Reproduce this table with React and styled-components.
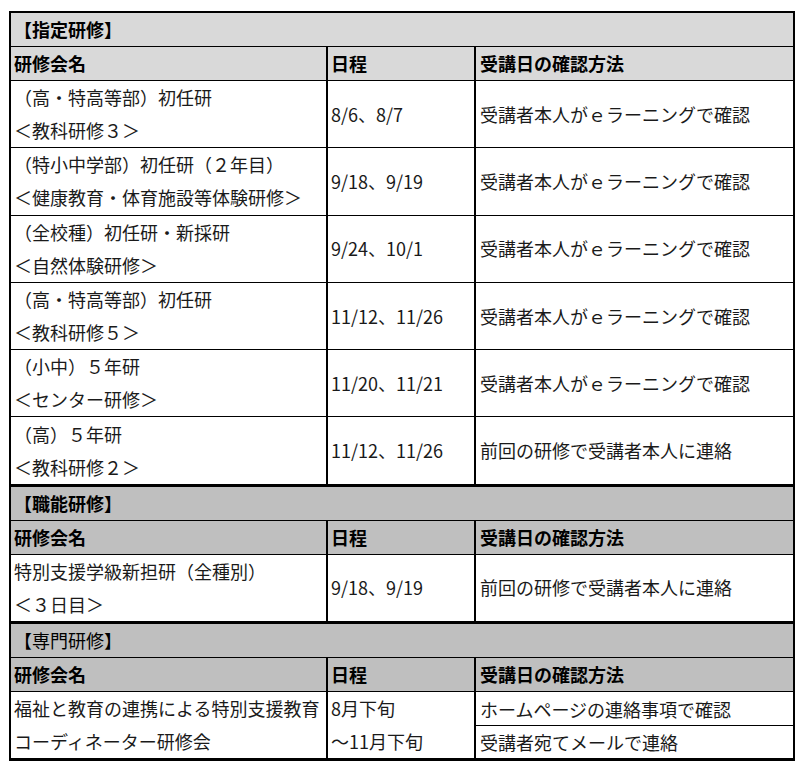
import React from "react";
import styled, { createGlobalStyle } from "styled-components";

const GlobalStyle = createGlobalStyle`
  html, body {
    margin: 0;
    padding: 0;
    background: #ffffff;
  }
  body {
    font-family: "Noto Sans CJK JP", "Noto Sans", sans-serif;
    font-size: 18px;
    color: #1a1a1a;
  }
`;

const Sheet = styled.div`
  box-sizing: border-box;
  width: 786px;
  margin: 11px 0 0 9px;
  border: 2px solid #000;
`;

const Section = styled.section`
  border-top: ${(p) => (p.$first ? "none" : "2px solid #000")};
`;

const Title = styled.div`
  box-sizing: border-box;
  height: 34px;
  line-height: 33px;
  padding-left: 3px;
  background: ${(p) => p.$bg};
  font-weight: ${(p) => (p.$bold ? 700 : 400)};
  color: #000;
  border-bottom: 1px solid #000;
  white-space: nowrap;
`;

const Row = styled.div`
  box-sizing: border-box;
  display: grid;
  grid-template-columns: 317px 148px 1fr;
  height: ${(p) => p.$h}px;
  background: ${(p) => p.$bg || "#ffffff"};
  font-weight: ${(p) => (p.$head ? 700 : 400)};
  color: ${(p) => (p.$head ? "#000" : "#1a1a1a")};
  border-bottom: 1px solid #000;
`;

const Cell = styled.div`
  display: flex;
  flex-direction: column;
  justify-content: center;
  padding-left: ${(p) => p.$pad || 3}px;
  border-right: ${(p) => (p.$end ? "none" : "2px solid #000")};
  line-height: 33px;
  white-space: nowrap;
  overflow: hidden;
`;

const SplitCell = styled.div`
  display: flex;
  flex-direction: column;
`;

const SubCell = styled.div`
  box-sizing: border-box;
  height: ${(p) => p.$h}px;
  line-height: ${(p) => p.$h}px;
  padding-left: 4px;
  border-bottom: ${(p) => (p.$line ? "1px solid #000" : "none")};
  white-space: nowrap;
`;

const Line = styled.span`
  display: block;
`;

const E = "受講者本人がｅラーニングで確認";
const R = "前回の研修で受講者本人に連絡";

const section1 = [
  ["（高・特高等部）初任研", "＜教科研修３＞", "8/6、8/7", E],
  ["（特小中学部）初任研（２年目）", "＜健康教育・体育施設等体験研修＞", "9/18、9/19", E],
  ["（全校種）初任研・新採研", "＜自然体験研修＞", "9/24、10/1", E],
  ["（高・特高等部）初任研", "＜教科研修５＞", "11/12、11/26", E],
  ["（小中）５年研", "＜センター研修＞", "11/20、11/21", E],
  ["（高）５年研", "＜教科研修２＞", "11/12、11/26", R],
];

const Header = ({ bg }) => (
  <Row $h={34} $bg={bg} $head>
    <Cell>研修会名</Cell>
    <Cell>日程</Cell>
    <Cell $end $pad={4}>受講日の確認方法</Cell>
  </Row>
);

const DataRow = ({ name1, name2, date, method, h }) => (
  <Row $h={h}>
    <Cell>
      <Line>{name1}</Line>
      <Line>{name2}</Line>
    </Cell>
    <Cell>{date}</Cell>
    <Cell $end $pad={4}>{method}</Cell>
  </Row>
);

export default function App() {
  return (
    <>
      <GlobalStyle />
      <Sheet>
        <Section $first>
          <Title $bg="#d9d9d9" $bold>【指定研修】</Title>
          <Header bg="#d9d9d9" />
          {section1.map(([a, b, d, m]) => (
            <DataRow key={a + d} name1={a} name2={b} date={d} method={m} h={67.3} />
          ))}
        </Section>
        <Section>
          <Title $bg="#bfbfbf" $bold>【職能研修】</Title>
          <Header bg="#bfbfbf" />
          <DataRow
            name1="特別支援学級新担研（全種別）"
            name2="＜３日目＞"
            date="9/18、9/19"
            method={R}
            h={67}
          />
        </Section>
        <Section>
          <Title $bg="#bfbfbf">【専門研修】</Title>
          <Header bg="#bfbfbf" />
          <Row $h={67}>
            <Cell>
              <Line>福祉と教育の連携による特別支援教育</Line>
              <Line>コーディネーター研修会</Line>
            </Cell>
            <Cell>
              <Line>8月下旬</Line>
              <Line>～11月下旬</Line>
            </Cell>
            <SplitCell>
              <SubCell $h={34} $line>ホームページの連絡事項で確認</SubCell>
              <SubCell $h={32}>受講者宛てメールで連絡</SubCell>
            </SplitCell>
          </Row>
        </Section>
      </Sheet>
    </>
  );
}
